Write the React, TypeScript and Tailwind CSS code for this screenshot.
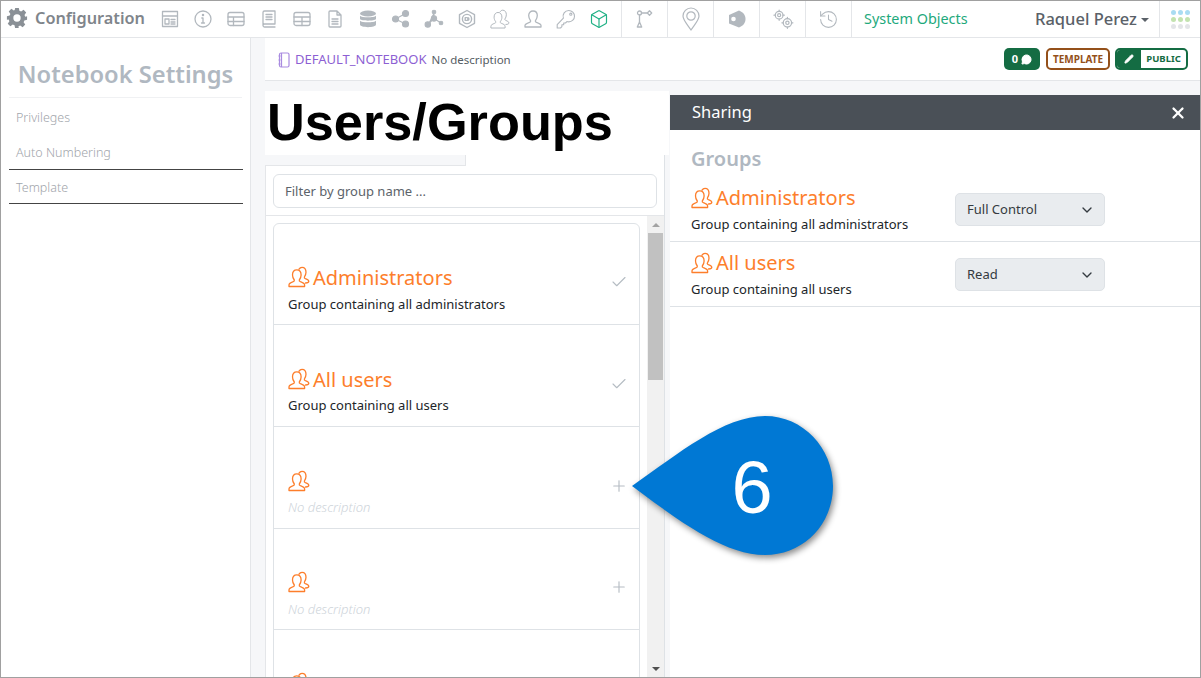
import React from "react";
import { Box, History, X, Check, Plus, ChevronDown, Pencil, MessageCircle } from "lucide-react";

const G = "#b2b8be";

function S({ children, c = G, w = 1.3, size = 20 }: { children: React.ReactNode; c?: string; w?: number; size?: number }) {
  return (
    <svg width={size} height={size} viewBox="0 0 20 20" fill="none" stroke={c} strokeWidth={w} strokeLinecap="round" strokeLinejoin="round">
      {children}
    </svg>
  );
}

function GroupIcon({ c = "#fd7e2b", size = 22, w = 1.3 }: { c?: string; size?: number; w?: number }) {
  return (
    <svg width={size} height={size} viewBox="0 0 22 22" fill="none" stroke={c} strokeWidth={w} strokeLinecap="round" strokeLinejoin="round">
      <path d="M1 20.500v-1.600c0-1.400 1.600-2.200 4.200-3.200.9-.4 1.400-.9 1.100-1.700C5.200 12.500 4.500 11 4.500 9c0-3.200 1.800-5.200 4.300-5.200 2.500 0 4.300 2 4.300 5.200 0 2-.7 3.500-1.800 5-.3.800.2 1.300 1.100 1.700 2.600 1 4.200 1.800 4.200 3.200v1.600z" />
      <path d="M11 3.200C11.700 2 12.800 1.300 14 1.300c2.400 0 4 2 4 5 0 1.900-.7 3.300-1.600 4.700-.3.700.1 1.200 1 1.600 2 .8 3.400 1.500 3.400 2.700 0 1.100-1 1.700-3.300 1.700" />
    </svg>
  );
}

const navIcons: React.ReactNode[] = [
  <S key="a"><rect x="2.500" y="2.500" width="15" height="15" /><path d="M2.500 7h15M5 10h4v5H5zM11 10.500h4M11 13h4M11 15h4" /></S>,
  <S key="b"><circle cx="10" cy="10" r="8" /><path d="M10 9v5M8.500 14h3M8.800 9H10" /><circle cx="10" cy="6" r=".6" /></S>,
  <S key="c"><rect x="2" y="3.500" width="16" height="13" rx="2" /><path d="M2 8h16M2 12.500h16M7.500 8v8.500" /></S>,
  <S key="d"><path d="M4 3.500A1.500 1.500 0 0 1 5.500 2H16v13H5.500A1.500 1.500 0 0 0 4 16.500zM4 16.500A1.500 1.500 0 0 0 5.500 18H16M7 5.500h6M7 8h6M7 10.500h6" /></S>,
  <S key="e"><rect x="2" y="3.500" width="16" height="13" rx="2" /><path d="M2 8h16M2 12.500h16M10 8v8.500" /></S>,
  <S key="f"><path d="M5 2h7l4 4v11a1 1 0 0 1-1 1H5a1 1 0 0 1-1-1V3a1 1 0 0 1 1-1zM12 2v4h4M7 10h6M7 12.500h6M7 15h6" /></S>,
  <svg key="g" width="20" height="20" viewBox="0 0 20 20" fill={G}><ellipse cx="10" cy="4.500" rx="8" ry="3" /><path d="M2 6.800C3.500 8.800 16.500 8.800 18 6.800V10C16.500 12.200 3.500 12.200 2 10zM2 11.800C3.500 13.800 16.500 13.800 18 11.800V15.500C18 19 2 19 2 15.500z" /></svg>,
  <svg key="h" width="20" height="20" viewBox="0 0 20 20" fill={G} stroke={G} strokeWidth="1.200"><circle cx="4.500" cy="10" r="3" /><circle cx="14.500" cy="4.500" r="3" /><circle cx="14.500" cy="15" r="3" /><path d="M4.500 10L14.500 4.500M4.500 10L14.500 15" /></svg>,
  <svg key="i" width="20" height="20" viewBox="0 0 20 20" fill={G} stroke={G} strokeWidth="1.100"><circle cx="10" cy="3" r="1.800" /><circle cx="10" cy="9.500" r="2.600" /><circle cx="3.800" cy="15.500" r="2.700" /><circle cx="17" cy="14" r="1.800" /><path d="M10 3v6.500L3.800 15.500M10 9.500L17 14" /></svg>,
  <S key="j" w={1.400}><path d="M10 1.500l7.500 4.200v8.600L10 18.500l-7.500-4.200V5.700z" /><circle cx="10" cy="10" r="4.600" /><path d="M9.500 8.600H8.200v2.800h1.300M10.800 8.600v2.800c1.500 0 1.500-2.800 0-2.800z" /></S>,
  <GroupIcon key="k" c={G} size={20} w={1.100} />,
  <S key="l"><path d="M2 18v-1.500c0-1.400 1.800-2.200 4.500-3.200 1-.4 1.300-1 1-1.700-1-1.400-1.800-3-1.800-5C5.700 3.700 7.500 2 10 2s4.300 1.700 4.300 4.600c0 2-.8 3.600-1.800 5-.3.700 0 1.300 1 1.700 2.700 1 4.500 1.800 4.500 3.200V18z" /></S>,
  <S key="m" w={1.100}><path d="M12.800 1.500a5.700 5.700 0 0 1 5.700 5.700 5.700 5.700 0 0 1-5.700 5.700c-.7 0-1.300-.1-1.900-.3L9.500 14H7.700v1.800H5.900v1.800L4.500 19H1.200v-3.300L7.400 9.100A5.700 5.700 0 0 1 12.800 1.500z" /><circle cx="14.800" cy="5.200" r="1.100" /></S>,
  <Box key="n" size={20} color="#20b185" strokeWidth={1.400} />,
];

const toolIcons: React.ReactNode[] = [
  <S key="a"><circle cx="4.500" cy="4" r="2" /><path d="M6.500 4h5.500M4.500 6v7" /><path d="M14.500 1.800l2.200 2.200-2.200 2.200-2.200-2.200z" /><path d="M4.500 13L2.300 18h4.400z" /></S>,
  <svg key="b" width="20" height="24" viewBox="0 0 20 24" fill="none" stroke={G} strokeWidth="1.200"><path d="M10 23C6 17 2 13 2 9a8 8 0 0 1 16 0c0 4-4 8-8 14z" /><circle cx="10" cy="9" r="4.200" /></svg>,
  <svg key="c" width="20" height="20" viewBox="0 0 20 20"><path d="M2 6L12 1.500c4 1.500 6.500 4.500 6.500 8.500s-2.500 7-6.500 8.500L2 14.500z" fill={G} /><circle cx="6.500" cy="10" r="2.300" fill="#fff" /></svg>,
  <S key="d" w={1.100} size={22}><circle cx="6.500" cy="6.500" r="3.500" /><circle cx="6.500" cy="6.500" r="1.400" /><circle cx="14" cy="13.500" r="3.800" /><circle cx="14" cy="13.500" r="1.500" /><path d="M6.500 1.800v1.200M6.500 10v1.200M1.800 6.500H3M10 6.500h1.200M14 8.500v1.200M14 17.300v1.200M9 13.500h1.200M17.800 13.500H19" /></S>,
  <History key="e" size={21} color={G} strokeWidth={1.200} />,
];

function ListRow({ title, desc, mark, tall }: { title?: string; desc?: string; mark: "check" | "plus"; tall?: boolean }) {
  return (
    <div className={tall ? "h-[102px] shrink-0 border-b border-[#dee2e6] flex items-end justify-between pl-[14px] pr-[11px] pb-[11px]" : "h-[101px] shrink-0 border-b border-[#dee2e6] flex items-end justify-between pl-[14px] pr-[11px] pb-[10px]"}>
      <div>
        <div className="flex items-end h-[30px] text-[20px] leading-[28px] text-[#fd7e2b]">
          <span className="mb-[3px] mr-[3px]"><GroupIcon /></span>
          <span className="translate-y-[1px]">{title}</span>
        </div>
        <div className={`${tall ? "mt-[2px]" : "mt-[3px]"} text-[13px] leading-[20px] ${desc ? "text-[#212529]" : "italic font-light text-[#ced4da]"}`}>
          {desc ?? "No description"}
        </div>
      </div>
      <div className={tall ? "mb-[22px]" : "mb-[23px]"}>
        {mark === "check" ? <Check size={18} color="#b5bcc3" strokeWidth={1.500} /> : <Plus size={18} color="#b5bcc3" strokeWidth={1.500} />}
      </div>
    </div>
  );
}

function ShareRow({ title, desc, value }: { title: string; desc: string; value: string }) {
  return (
    <div className="h-[65px] pb-[1px] border-b border-[#dee2e6] flex items-center justify-between pl-[21px] pr-[95px]">
      <div>
        <div className="flex items-center text-[20px] leading-[28px] text-[#fd7e2b]">
          <span className="mr-[3px]"><GroupIcon /></span>
          {title}
        </div>
        <div className="text-[13px] leading-[20px] mt-[2px] text-[#212529]">{desc}</div>
      </div>
      <div className="w-[150px] h-[33px] mt-[2px] rounded-[5px] bg-[#e9ecef] border border-[#dee2e6] flex items-center justify-between pl-[11px] pr-[9px] pt-[1px] text-[13px] text-[#343a40]">
        {value}
        <ChevronDown size={16} color="#343a40" strokeWidth={2} />
      </div>
    </div>
  );
}

export default function App() {
  return (
    <div className="relative w-[1201px] h-[678px] overflow-hidden border border-[#a0a0a0] bg-white flex flex-col [font-family:Noto_Sans,sans-serif]">
      <nav className="h-[37px] shrink-0 border-b border-[#e4e6e9] flex items-center">
        <div className="w-[152px] flex items-center pl-[5px] gap-[7px] -mt-[2px]">
          <svg width="22" height="22" viewBox="0 0 24 24" fill="#8a9096">
            <path fillRule="evenodd" d="M10 1h4l.6 3.100 1.900.8 2.700-1.800 2.800 2.800-1.800 2.700.8 1.900L23 10v4l-3 .6-.8 1.900 1.800 2.700-2.800 2.800-2.700-1.800-1.900.8L13.900 23h-4l-.6-3-1.900-.8-2.700 1.800-2.800-2.800 1.800-2.700-.8-1.900L1 14v-4l3-.6.8-1.900L3 4.800 5.800 2l2.700 1.800 1-.6zM12 8a4 4 0 1 0 0 8 4 4 0 0 0 0-8z" />
          </svg>
          <span className="text-[16.300px] font-semibold text-[#7f858b]">Configuration</span>
        </div>
        <div className="flex -mt-[1px]">
          {navIcons.map((ic, i) => (
            <div key={i} className="w-[33px] flex justify-center items-center">{ic}</div>
          ))}
        </div>
        <div className="w-[6px]" />
        <div className="flex h-full">
          {toolIcons.map((ic, i) => (
            <div key={i} className="w-[46px] h-full border-l border-[#e4e6e9] flex items-center justify-center">{ic}</div>
          ))}
        </div>
        <div className="h-full border-l border-[#e4e6e9] pl-[12px] flex items-center text-[14.400px] text-[#1ea97c]">System Objects</div>
        <div className="flex-1" />
        <div className="flex items-center text-[16.500px] font-medium text-[#5a6168]">
          Raquel Perez
          <span className="ml-[4px] mt-[2px] w-0 h-0 border-x-[4px] border-x-transparent border-t-[4px] border-t-[#5a6168]" />
        </div>
        <div className="ml-[10px] w-[41px] h-full border-l border-[#e4e6e9] flex items-center justify-center">
          <div className="grid grid-cols-3 gap-[2px]">
            {["#a9dcf2", "#a9dcf2", "#a9dcf2", "#c3e3b0", "#c3e3b0", "#c3e3b0", "#e3e5e8", "#e3e5e8", "#e3e5e8"].map((c, i) => (
              <span key={i} className="w-[5px] h-[5px] rounded-full" style={{ background: c }} />
            ))}
          </div>
        </div>
      </nav>

      <div className="flex-1 min-h-0 flex">
        <aside className="w-[250px] shrink-0 border-r border-[#e4e6e9] px-[8px] pt-[18px]">
          <h2 className="text-[23.700px] leading-[36px] font-semibold text-[#b0b8c1] text-center border-b border-[#f0f1f3] pb-[5px]">Notebook Settings</h2>
          <div className="text-[12.500px] font-light text-[#9fa5ab] pl-[7px]">
            <div className="h-[35px] flex items-center pt-[3px] mt-[1px]">Privileges</div>
            <div className="h-[35px] flex items-center pt-[3px]">Auto Numbering</div>
          </div>
          <div className="text-[12.500px] font-light text-[#9fa5ab] pl-[7px] pt-[3px] border-y border-[#444] h-[35px] flex items-center w-[234px]">Template</div>
        </aside>

        <main className="flex-1 min-w-0 pl-[14px] bg-[#f6f7f9] flex flex-col">
          <header className="h-[43px] shrink-0 bg-white border-b border-[#e4e6e9] flex items-center pl-[13px] pr-[12px]">
            <svg width="12" height="16" viewBox="0 0 12 16" fill="none" stroke="#a98be0" strokeWidth="1.200" className="mt-[1px]"><rect x="1.500" y="1" width="9.500" height="14" rx="1.500" /><path d="M3.500 1v14M.5 4h2M.5 8h2M.5 12h2" /></svg>
            <span className="ml-[5px] mt-[2px] text-[13px] text-[#8d5fd3]">DEFAULT_NOTEBOOK</span>
            <span className="ml-[5px] mt-[2px] text-[11.500px] text-[#555c63]">No description</span>
            <div className="flex-1" />
            <div className="w-[36px] h-[22px] rounded-[5px] bg-[#146c43] flex items-center justify-center gap-[3px] text-[11px] font-bold text-white">
              0 <MessageCircle size={11} fill="#fff" color="#fff" />
            </div>
            <div className="ml-[6px] w-[64px] h-[22px] rounded-[5px] border-2 border-[#94501a] flex items-center justify-center text-[10px] font-bold text-[#94501a]">TEMPLATE</div>
            <div className="ml-[5px] w-[73px] h-[22px] rounded-[5px] border-2 border-[#146c43] flex items-center overflow-hidden">
              <div className="w-[24px] h-full bg-[#146c43] flex items-center justify-center"><Pencil size={10} color="#fff" fill="#fff" /></div>
              <div className="flex-1 text-center text-[9.500px] font-bold text-[#146c43]">PUBLIC</div>
            </div>
          </header>

          <div className="flex-1 min-h-0 flex gap-[1px] pt-[10px]">
            <section className="w-[404px] shrink-0 flex flex-col min-h-0">
              <h1 className="h-[64px] shrink-0 bg-white flex items-center pl-[2px] pb-[1px] text-[52.300px] font-bold text-black [font-family:Liberation_Sans,Arial,sans-serif]">Users/Groups</h1>
              <div className="w-[400px] flex-1 min-h-0 flex flex-col bg-white border-r border-[#dee2e6]">
                <div className="h-[11px] shrink-0 w-[201px] bg-[#f6f7f9] border-r border-b border-[#e4e6e9]" />
                <div className="h-[50px] shrink-0 border-l border-b border-[#e4e6e9] px-[7px] pt-[8px]">
                  <div className="h-[34px] rounded-[6px] border border-[#dee2e6] flex items-center pl-[11px] pt-[1px] text-[13px] text-[#5c636a]">Filter by group name ...</div>
                </div>
                <div className="flex-1 min-h-0 flex border-l border-[#e4e6e9] overflow-hidden">
                  <div className="flex-1 min-w-0 pl-[7px] pr-[8px] pt-[7px] overflow-hidden">
                    <div className="w-[367px] border border-[#dee2e6] rounded-t-[6px] flex flex-col">
                      <ListRow title="Administrators" desc="Group containing all administrators" mark="check" />
                      <ListRow tall title="All users" desc="Group containing all users" mark="check" />
                      <ListRow tall mark="plus" />
                      <ListRow mark="plus" />
                      <div className="h-[48px] shrink-0 pl-[14px] pt-[42px]"><GroupIcon /></div>
                    </div>
                  </div>
                  <div className="w-[17px] shrink-0 bg-[#f1f1f1] flex flex-col items-center">
                    <div className="h-[17px] w-full flex items-center justify-center"><span className="w-0 h-0 border-x-[4px] border-x-transparent border-b-[4px] border-b-[#a3a3a3]" /></div>
                    <div className="h-[147px] w-[15px] bg-[#c1c1c1]" />
                    <div className="flex-1" />
                    <div className="h-[17px] w-full flex items-center justify-center"><span className="w-0 h-0 border-x-[4px] border-x-transparent border-t-[4px] border-t-[#505050]" /></div>
                  </div>
                </div>
              </div>
            </section>

            <section className="flex-1 min-w-0 mt-[4px] bg-white flex flex-col">
              <div className="h-[35px] shrink-0 bg-[#4a5057] flex items-center justify-between pl-[22px] pr-[13px] text-[16.500px] text-white">
                Sharing
                <X size={18} color="#fff" strokeWidth={3} />
              </div>
              <div className="pl-[21px] pt-[14px] h-[47px] text-[20px] leading-[30px] font-semibold text-[#b0b8c1]">Groups</div>
              <ShareRow title="Administrators" desc="Group containing all administrators" value="Full Control" />
              <ShareRow title="All users" desc="Group containing all users" value="Read" />
            </section>
          </div>
        </main>
      </div>

      <div className="absolute left-[628px] top-[412px] w-[212px] h-[150px] drop-shadow-[2px_3px_3px_rgba(0,0,0,0.45)]">
        <svg width="212" height="150" viewBox="0 0 212 150">
          <path d="M3 73C50 40 95 3 136 3C174 3 204 35 204 73C204 112 174 142 136 142C95 142 50 108 3 73Z" fill="#0078d4" />
        </svg>
        <div className="absolute left-[88px] top-[27px] w-[70px] h-[96px] flex items-center justify-center text-[74px] leading-[96px] text-white [font-family:Liberation_Sans,Arial,sans-serif]">6</div>
      </div>
    </div>
  );
}
